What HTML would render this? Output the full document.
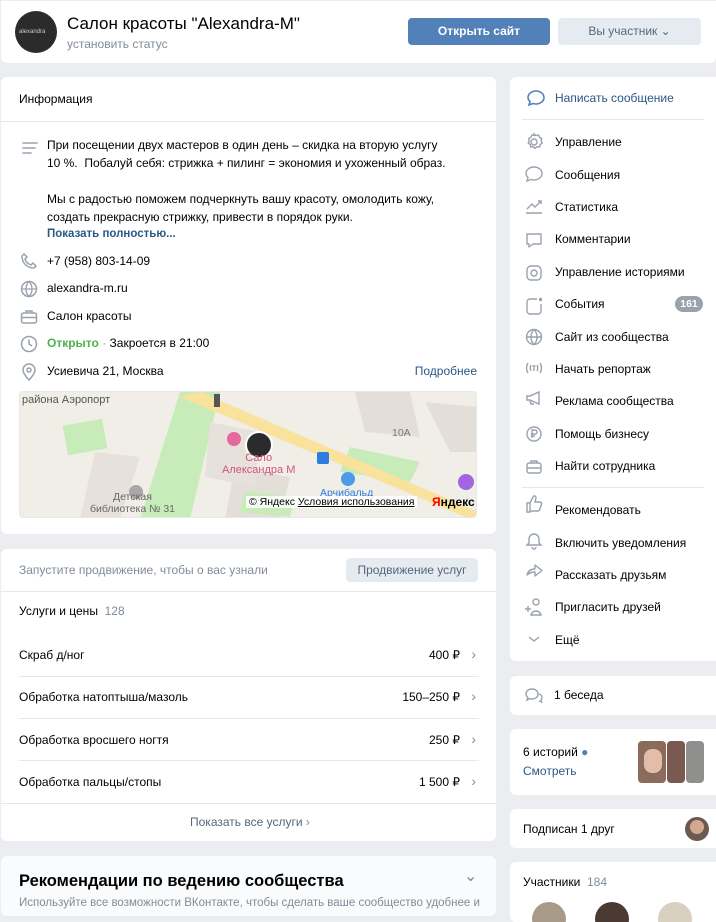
<!DOCTYPE html>
<html><head><meta charset="utf-8"><style>
*{box-sizing:border-box;margin:0;padding:0}
body{width:716px;height:908px;overflow:hidden;background:#ebedf0;font-family:"Liberation Sans",Arial,sans-serif;font-size:12px;color:#000;position:relative}
.card{position:absolute;background:#fff;border-radius:6px;overflow:hidden}
.a{position:absolute;white-space:nowrap}
.g{color:#818c99}
.ic{position:absolute;width:20px;height:20px}
svg{overflow:visible}
.ln{position:absolute;height:1px;background:#e7e8ec}
</style></head><body>

<div class="card" style="left:1px;top:1px;width:715px;height:62px;border-radius:0 0 6px 6px">
  <div class="a" style="left:14px;top:10px;width:42px;height:42px;border-radius:50%;background:#2b2b2b"></div>
  <div class="a" style="left:18px;top:28px;font-size:6px;color:#ccc">alexandra</div>
  <div class="a" style="left:66px;top:13px;font-size:17px">Салон красоты "Alexandra-M"</div>
  <div class="a g" style="left:66px;top:36px;font-size:12px">установить статус</div>
  <div class="a" style="left:407px;top:17px;width:142px;height:27px;background:#5181b8;border-radius:4px;color:#fff;font-weight:bold;text-align:center;line-height:27px;font-size:12px">Открыть сайт</div>
  <div class="a" style="left:557px;top:17px;width:143px;height:27px;background:#e5ebf1;border-radius:4px;color:#55677d;text-align:center;line-height:27px;font-size:12px">Вы участник &#8964;</div>
</div>

<div class="card" style="left:1px;top:77px;width:495px;height:457px">
  <div class="a" style="left:18px;top:15px">Информация</div>
  <div class="ln" style="left:0;top:44px;width:495px"></div>
  <svg class="ic" style="left:20px;top:62px" viewBox="0 0 20 20"><path d="M2 4h14M2 9h12M2 14h8" stroke="#99a2ad" stroke-width="1.6" stroke-linecap="round"/></svg>
  <div class="a" style="left:46px;top:60px;line-height:17.5px;white-space:normal;width:400px">При посещении двух мастеров в один день – скидка на вторую услугу 10 %.&nbsp; Побалуй себя: стрижка + пилинг = экономия и ухоженный образ.</div>
  <div class="a" style="left:46px;top:114px;line-height:17.5px;white-space:normal;width:400px">Мы с радостью поможем подчеркнуть вашу красоту, омолодить кожу, создать прекрасную стрижку, привести в порядок руки.</div>
  <div class="a" style="left:46px;top:151px;color:#2a5885;font-weight:bold;font-size:11.5px">Показать полностью...</div>
  <svg class="ic" style="left:18px;top:175px" viewBox="0 0 20 20"><path d="M5 2l3 3-2 2c1 3 3 5 6 6l2-2 3 3-2 2C8 16 3 11 3 4z" fill="none" stroke="#99a2ad" stroke-width="1.5"/></svg>
  <div class="a" style="left:46px;top:177px">+7 (958) 803-14-09</div>
  <svg class="ic" style="left:18px;top:202px" viewBox="0 0 20 20"><circle cx="10" cy="10" r="7.5" fill="none" stroke="#99a2ad" stroke-width="1.5"/><path d="M2.5 10h15M10 2.5c-4 4-4 11 0 15M10 2.5c4 4 4 11 0 15" fill="none" stroke="#99a2ad" stroke-width="1.3"/></svg>
  <div class="a" style="left:46px;top:204px">alexandra-m.ru</div>
  <svg class="ic" style="left:18px;top:230px" viewBox="0 0 20 20"><rect x="2.5" y="6" width="15" height="10" rx="2" fill="none" stroke="#99a2ad" stroke-width="1.5"/><path d="M7 6V4h6v2M2.5 10.5h15" fill="none" stroke="#99a2ad" stroke-width="1.5"/></svg>
  <div class="a" style="left:46px;top:232px">Салон красоты</div>
  <svg class="ic" style="left:18px;top:257px" viewBox="0 0 20 20"><circle cx="10" cy="10" r="7.5" fill="none" stroke="#99a2ad" stroke-width="1.5"/><path d="M10 5.5v4.5l3 2" fill="none" stroke="#99a2ad" stroke-width="1.5"/></svg>
  <div class="a" style="left:46px;top:259px"><span style="color:#4bb34b;font-weight:bold">Открыто</span> <span class="g">·</span> Закроется в 21:00</div>
  <svg class="ic" style="left:18px;top:285px" viewBox="0 0 20 20"><path d="M10 18s-6-6-6-10a6 6 0 0112 0c0 4-6 10-6 10z" fill="none" stroke="#99a2ad" stroke-width="1.5"/><circle cx="10" cy="8" r="2" fill="none" stroke="#99a2ad" stroke-width="1.5"/></svg>
  <div class="a" style="left:46px;top:287px">Усиевича 21, Москва</div>
  <div class="a" style="right:19px;top:287px;color:#2a5885">Подробнее</div>
  <div class="a" style="left:18px;top:314px;width:458px;height:127px;border:1px solid #e7e8ec;border-radius:4px;overflow:hidden;background:#f2efe9">
    <svg width="458" height="127" viewBox="0 0 458 127" style="position:absolute;left:0;top:0">
      <rect x="0" y="0" width="458" height="127" fill="#f1eee8"/>
      <polygon points="120,127 160,0 200,0 170,127" fill="#c8ecb9"/>
      <rect x="45" y="30" width="40" height="30" fill="#c8ecb9" transform="rotate(-10 65 45)"/>
      <polygon points="215,75 270,85 260,127 205,127" fill="#e3dfd8"/>
      <polygon points="225,100 275,105 270,125 220,120" fill="#c8ecb9"/>
      <polygon points="330,55 400,70 390,90 320,80" fill="#c8ecb9"/>
      <polygon points="335,0 390,0 400,45 345,40" fill="#e3dfd8"/>
      <polygon points="405,10 458,15 458,60 430,60" fill="#e3dfd8"/>
      <polygon points="180,0 458,120 458,127 450,127 160,5" fill="#f9e29c"/>
      <polygon points="190,30 240,40 235,95 185,85" fill="#e6e2db"/>
      <polygon points="75,60 120,65 100,127 60,127" fill="#e6e2db"/>
      <circle cx="214" cy="47" r="7" fill="#e5679b"/>
      <circle cx="239" cy="53" r="13" fill="#2b2b2b" stroke="#fff" stroke-width="2"/>
      <rect x="297" y="60" width="12" height="12" rx="2" fill="#2b7de0"/>
      <circle cx="328" cy="87" r="7" fill="#4c9be8"/>
      <circle cx="446" cy="90" r="8" fill="#a066e0"/>
      <circle cx="116" cy="100" r="7" fill="#a8a8a8"/>
      <rect x="194" y="2" width="6" height="13" fill="#555"/>
    </svg>
    <div class="a" style="left:2px;top:2px;font-size:11px;color:#555">района Аэропорт</div>
    <div class="a" style="left:202px;top:60px;font-size:11px;color:#d2527e;line-height:12px;text-align:center">Сало<br>Александра М</div>
    <div class="a" style="left:70px;top:99px;font-size:10.5px;color:#666;line-height:12px;text-align:center">Детская<br>библиотека № 31</div>
    <div class="a" style="left:300px;top:95px;font-size:10.5px;color:#2b7de0">Арчибальд</div>
    <div class="a" style="left:372px;top:35px;font-size:10.5px;color:#777">10А</div>
    <div class="a" style="left:226px;top:104px;font-size:10.5px;background:rgba(255,255,255,.85);padding:0 3px">© Яндекс <u>Условия использования</u></div>
    <div class="a" style="left:412px;top:103px;font-size:12px;font-weight:bold;color:#000"><span style="color:#f00">Я</span>ндекс</div>
  </div>
</div>

<div class="card" style="left:1px;top:549px;width:495px;height:292px">
  <div class="a g" style="left:18px;top:14px">Запустите продвижение, чтобы о вас узнали</div>
  <div class="a" style="left:345px;top:9px;width:132px;height:24px;background:#e5ebf1;border-radius:4px;color:#55677d;text-align:center;line-height:24px">Продвижение услуг</div>
  <div class="ln" style="left:0;top:42px;width:495px"></div>
  <div class="a" style="left:18px;top:55px">Услуги и цены <span class="g">&nbsp;128</span></div>
  <div class="a" style="left:18px;top:99px">Скраб д/ног</div><div class="a" style="right:36px;top:99px">400 ₽</div><div class="a g" style="right:20px;top:97px;font-size:14px">›</div>
  <div class="ln" style="left:18px;top:127px;width:460px"></div>
  <div class="a" style="left:18px;top:141px">Обработка натоптыша/мазоль</div><div class="a" style="right:36px;top:141px">150–250 ₽</div><div class="a g" style="right:20px;top:139px;font-size:14px">›</div>
  <div class="ln" style="left:18px;top:169px;width:460px"></div>
  <div class="a" style="left:18px;top:184px">Обработка вросшего ногтя</div><div class="a" style="right:36px;top:184px">250 ₽</div><div class="a g" style="right:20px;top:182px;font-size:14px">›</div>
  <div class="ln" style="left:18px;top:211px;width:460px"></div>
  <div class="a" style="left:18px;top:226px">Обработка пальцы/стопы</div><div class="a" style="right:36px;top:226px">1 500 ₽</div><div class="a g" style="right:20px;top:224px;font-size:14px">›</div>
  <div class="ln" style="left:0;top:254px;width:495px"></div>
  <div class="a" style="left:189px;top:266px;color:#55677d">Показать все услуги <span class="g">›</span></div>
</div>

<div class="card" style="left:1px;top:856px;width:495px;height:60px;background:#fafbfc">
  <div class="a" style="left:18px;top:16px;font-size:16.5px;font-weight:bold">Рекомендации по ведению сообщества</div>
  <div class="a g" style="left:463px;top:10px;font-size:16px">&#8964;</div>
  <div class="a g" style="left:18px;top:41px;font-size:11.5px">Используйте все возможности ВКонтакте, чтобы сделать ваше сообщество удобнее и</div>
</div>

<div class="card" style="left:510px;top:77px;width:206px;height:584px;border-radius:6px 0 0 6px">
  <svg class="ic" style="left:16px;top:11px" viewBox="0 0 20 20"><path d="M10 3c4.5 0 8 3 8 6.5S14.5 16 10 16c-1 0-2-.2-3-.5L3 17l1-3.5C2.7 12.3 2 11 2 9.5 2 6 5.5 3 10 3z" fill="none" stroke="#5181b8" stroke-width="1.6"/></svg>
  <div class="a" style="left:45px;top:14px;color:#2a5885">Написать сообщение</div>
  <div class="ln" style="left:12px;top:42px;width:182px"></div>
</div>
<div class="a" style="left:555px;top:135px">Управление</div>
<div class="a" style="left:555px;top:168px">Сообщения</div>
<div class="a" style="left:555px;top:200px">Статистика</div>
<div class="a" style="left:555px;top:232px">Комментарии</div>
<div class="a" style="left:555px;top:265px">Управление историями</div>
<div class="a" style="left:555px;top:297px">События</div>
<div class="a" style="left:675px;top:296px;width:28px;height:16px;border-radius:8px;background:#99a2ad;color:#fff;font-size:10.5px;font-weight:bold;text-align:center;line-height:16px">161</div>
<div class="a" style="left:555px;top:330px">Сайт из сообщества</div>
<div class="a" style="left:555px;top:362px">Начать репортаж</div>
<div class="a" style="left:555px;top:394px">Реклама сообщества</div>
<div class="a" style="left:555px;top:427px">Помощь бизнесу</div>
<div class="a" style="left:555px;top:459px">Найти сотрудника</div>
<div class="ln" style="left:522px;top:487px;width:182px"></div>
<div class="a" style="left:555px;top:503px">Рекомендовать</div>
<div class="a" style="left:555px;top:536px">Включить уведомления</div>
<div class="a" style="left:555px;top:568px">Рассказать друзьям</div>
<div class="a" style="left:555px;top:600px">Пригласить друзей</div>
<div class="a" style="left:555px;top:633px">Ещё</div>
<svg style="position:absolute;left:524px;top:130px" width="24" height="520" viewBox="0 0 24 520" fill="none" stroke="#99a2ad" stroke-width="1.4">
  <circle cx="10" cy="12" r="3"/><path d="M10 4l2 1.5 2.5-.5 1 2.3 2.2 1.2-.5 2.5 1 2-2 1.5-.5 2.5-2.5-.3-2 1.6-2-1.6-2.5.3-.5-2.5-2-1.5 1-2-.5-2.5 2.2-1.2 1-2.3 2.5.5z"/>
  <path d="M10 37c4.4 0 8 2.8 8 6.5s-3.6 6.5-8 6.5c-1 0-2-.2-3-.5L3 51l1-3.5C2.7 46.3 2 45 2 43.5 2 39.8 5.6 37 10 37z"/>
  <path d="M2 83h16M3 79l5-5 3 3 6-6M14 71h3v3"/>
  <path d="M3 104h14v10h-8l-4 3v-3H3z" stroke-linejoin="round"/>
  <rect x="3" y="136" width="14" height="14" rx="4"/><circle cx="10" cy="143" r="3"/>
  <path d="M13 169H6a3 3 0 00-3 3v9a3 3 0 003 3h8a3 3 0 003-3v-7"/><circle cx="16.5" cy="169.5" r="1" fill="#99a2ad"/>
  <circle cx="10" cy="207" r="7.5"/><path d="M2.5 207h15M10 199.5c-4 4-4 11 0 15M10 199.5c4 4 4 11 0 15"/>
  <path d="M4 233c-2 3-2 7 0 10M7 235c-1 2-1 4 0 6M16 233c2 3 2 7 0 10M13 235c1 2 1 4 0 6M8.5 236h3M10 236v5"/>
  <path d="M3 266h3l9-4v12l-9-4H3zM6 270l1 4h3"/>
  <circle cx="10" cy="304" r="7"/><path d="M8 308v-8h3a2 2 0 010 4H7M7 306h4"/>
  <rect x="3" y="333" width="14" height="10" rx="2"/><path d="M7 333v-2h6v2M3 338h14"/>
  <path d="M3 373h3v9H3zM6 373l3-6c1-2 3-1 3 1l-1 4h5c1 0 2 1 1.5 2l-2 6c-.3 1-1 1-2 1H6"/>
  <path d="M10 404a5 5 0 015 5v4l2 2H3l2-2v-4a5 5 0 015-5zM8 417a2 2 0 004 0"/>
  <path d="M11 435v4c-4 0-7 2-8 6 2-2 5-3 8-3v4l7-5.5z" stroke-linejoin="round"/>
  <path d="M1 479h6M4 476v6M12 472m-3 0a3 3 0 106 0 3 3 0 10-6 0M7 485c1-3 3-4 5-4s4 1 5 4z"/>
  <path d="M5 507l5 4 5-4"/>
</svg>

<div class="card" style="left:510px;top:676px;width:206px;height:39px;border-radius:6px 0 0 6px">
  <svg class="ic" style="left:14px;top:10px" viewBox="0 0 20 20" fill="none" stroke="#99a2ad" stroke-width="1.4"><path d="M8 3c3.5 0 6 2 6 5s-2.5 5-6 5c-1 0-1.6-.2-2.3-.4L3 14l.8-2.5C2.7 10.6 2 9.4 2 8c0-3 2.5-5 6-5zM15 8c2 .7 3 2 3 3.5 0 1-.4 1.8-1 2.5l.5 2-2.5-1"/></svg>
  <div class="a" style="left:44px;top:12px">1 беседа</div>
</div>

<div class="card" style="left:510px;top:729px;width:206px;height:66px;border-radius:6px 0 0 6px">
  <div class="a" style="left:13px;top:16px">6 историй <span style="color:#5181b8">●</span></div>
  <div class="a" style="left:13px;top:35px;color:#2a5885">Смотреть</div>
  <div class="a" style="left:128px;top:12px;width:28px;height:42px;border-radius:4px;background:#8a6b5c"></div>
  <div class="a" style="left:134px;top:20px;width:18px;height:24px;border-radius:8px;background:#e4bcaa"></div>
  <div class="a" style="left:157px;top:12px;width:18px;height:42px;border-radius:4px;background:#7a5a50"></div>
  <div class="a" style="left:176px;top:12px;width:18px;height:42px;border-radius:4px;background:#8f908e"></div>
</div>

<div class="card" style="left:510px;top:809px;width:206px;height:39px;border-radius:6px 0 0 6px">
  <div class="a" style="left:13px;top:13px">Подписан 1 друг</div>
  <div class="a" style="left:175px;top:8px;width:24px;height:24px;border-radius:50%;background:#6b5a4f;overflow:hidden"><div style="position:absolute;left:5px;top:3px;width:14px;height:14px;border-radius:50%;background:#d4a890"></div></div>
</div>

<div class="card" style="left:510px;top:862px;width:206px;height:60px;border-radius:6px 0 0 6px">
  <div class="a" style="left:13px;top:13px">Участники <span class="g">&nbsp;184</span></div>
  <div class="a" style="left:22px;top:40px;width:34px;height:34px;border-radius:50%;background:#a89a88"></div>
  <div class="a" style="left:85px;top:40px;width:34px;height:34px;border-radius:50%;background:#4a3a32"></div>
  <div class="a" style="left:148px;top:40px;width:34px;height:34px;border-radius:50%;background:#d8d0c0"></div>
</div>
</body></html>
